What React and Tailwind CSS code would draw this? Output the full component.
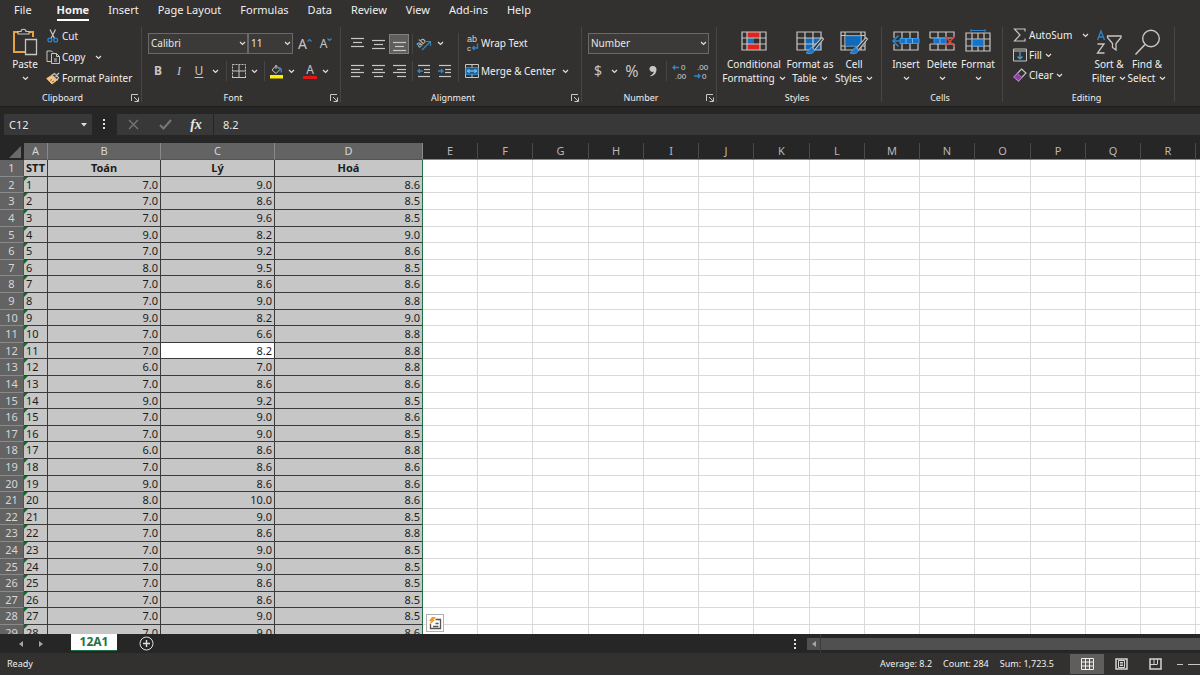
import React from 'react';
import clsx from 'clsx';

const MENU = ['File', 'Home', 'Insert', 'Page Layout', 'Formulas', 'Data', 'Review', 'View', 'Add-ins', 'Help'];

const COLUMNS = 'ABCDEFGHIJKLMNOPQRSTUVWXYZ'.split('');

const SCORES = [
  ['7.0', '9.0', '8.6'],
  ['7.0', '8.6', '8.5'],
  ['7.0', '9.6', '8.5'],
  ['9.0', '8.2', '9.0'],
  ['7.0', '9.2', '8.6'],
  ['8.0', '9.5', '8.5'],
  ['7.0', '8.6', '8.6'],
  ['7.0', '9.0', '8.8'],
  ['9.0', '8.2', '9.0'],
  ['7.0', '6.6', '8.8'],
  ['7.0', '8.2', '8.8'],
  ['6.0', '7.0', '8.8'],
  ['7.0', '8.6', '8.6'],
  ['9.0', '9.2', '8.5'],
  ['7.0', '9.0', '8.6'],
  ['7.0', '9.0', '8.5'],
  ['6.0', '8.6', '8.8'],
  ['7.0', '8.6', '8.6'],
  ['9.0', '8.6', '8.6'],
  ['8.0', '10.0', '8.6'],
  ['7.0', '9.0', '8.5'],
  ['7.0', '8.6', '8.8'],
  ['7.0', '9.0', '8.5'],
  ['7.0', '9.0', '8.5'],
  ['7.0', '8.6', '8.5'],
  ['7.0', '8.6', '8.5'],
  ['7.0', '9.0', '8.5'],
  ['7.0', '9.0', '8.6'],
];

/* ---------- icons ---------- */

const Svg = ({ w, h, children, className }) => (
  <svg width={w} height={h} viewBox={`0 0 ${w} ${h}`} fill="none" stroke="#c8c6c4" className={clsx('shrink-0 overflow-visible', className)} aria-hidden="true">
    {children}
  </svg>
);

const IconText = ({ x, y, size, transform, children }) => (
  <text x={x} y={y} fontSize={size} fill="#d6d4d2" stroke="none" transform={transform} className="font-['Liberation_Sans',sans-serif]">
    {children}
  </text>
);

const Chevron = ({ className }) => (
  <Svg w={7} h={5} className={className}>
    <path d="M1 1l2.5 2.5L6 1" stroke="#e1dfdd" strokeWidth="1.2" />
  </Svg>
);

const PasteIcon = () => (
  <Svg w={26} h={28}>
    <path d="M6 4H2v20h11M17 4h4v5" stroke="#e8a33d" strokeWidth="2" />
    <path d="M6 6V3.500h3C9 .5 14 .5 14 3.500h3V6z" strokeWidth="1.200" />
    <path d="M13.500 11.500h11v15h-11z" fill="#323130" strokeWidth="1.300" />
  </Svg>
);

const CutIcon = () => (
  <Svg w={12} h={14}>
    <path d="M3 .5l4.500 9M8.500 .5L4 9.500" strokeWidth="1.200" />
    <circle cx="2.800" cy="11" r="1.900" stroke="#2f86cc" strokeWidth="1.300" />
    <circle cx="8.700" cy="11" r="1.900" stroke="#2f86cc" strokeWidth="1.300" />
  </Svg>
);

const CopyIcon = () => (
  <Svg w={15} h={14}>
    <path d="M5 11.500H1V1h4.500L7 2.500" />
    <path d="M5.500 3.500h5l3 3v7h-8z" />
    <path d="M10.500 3.500v3h3M8 9h3M8 11h3" />
  </Svg>
);

const PainterIcon = () => (
  <Svg w={14} h={13}>
    <path d="M13 1L9.500 4.500M6 3l5 5 1.500-2.500L8.500 1.500z" strokeWidth="1.200" />
    <path d="M5.500 3.500L.7 6.500 6 12l4.500-3.500z" fill="#f0c890" stroke="#e8b870" />
    <path d="M4 8.500l2-1M6 10l2-1" stroke="#8a6a3a" />
  </Svg>
);

const BordersIcon = () => (
  <Svg w={14} h={14}>
    <path d="M.5 .5h13v13H.5z" strokeDasharray="2 1" />
    <path d="M7 1v12M1 7h12" />
    <path d="M0 13.500h14" />
  </Svg>
);

const FillColorIcon = () => (
  <Svg w={15} h={15}>
    <path d="M7 1.500L3 6l4 3.500L11 5.500z" />
    <path d="M7 1v4" />
    <path d="M10 3.500c2 .5 2.500 2 2.300 5" stroke="#2f86cc" strokeWidth="1.500" />
    <path d="M1 11h13v3.500H1z" fill="#ffee00" stroke="none" />
  </Svg>
);

const Lines = ({ rows, w = 13, h = 14, children }) => (
  <Svg w={w} h={h}>
    {rows.map(([x, y, len]) => (
      <path key={y} d={`M${x} ${y}.5h${len}`} strokeWidth="1.200" />
    ))}
    {children}
  </Svg>
);

const OrientationIcon = () => (
  <Svg w={16} h={14}>
    <IconText x="0" y="8" size="9" transform="rotate(-45 5 7)">ab</IconText>
    <path d="M5 13l8-8M9 4.500h4.500V9" stroke="#2f86cc" strokeWidth="1.200" />
  </Svg>
);

const WrapIcon = () => (
  <Svg w={13} h={16}>
    <IconText x="1" y="7" size="9">ab</IconText>
    <IconText x="1" y="16" size="8">c</IconText>
    <path d="M11.500 8.500V13H6.500M8.500 11l-2 2 2 2" stroke="#2f86cc" strokeWidth="1.300" />
  </Svg>
);

const MergeIcon = () => (
  <Svg w={14} h={14}>
    <path d="M.5 .5h13v13H.5z" />
    <path d="M1 3.500h12v7H1z" fill="#1c5f94" stroke="#2f86cc" />
    <path d="M7 .5v3M7 10.500v3" />
    <path d="M2.500 7h9M4.500 5l-2 2 2 2M9.500 5l2 2-2 2" stroke="#a9d6f5" />
  </Svg>
);

const IndentIcon = ({ out }) => (
  <Lines w={14} rows={[[1, 1, 12], [7, 5, 6], [7, 8, 6], [1, 12, 12]]}>
    <path d={out ? 'M6 7H1M3 5L1 7l2 2' : 'M0 7h5M3 5l2 2-2 2'} stroke="#2f86cc" strokeWidth="1.300" />
  </Lines>
);

const DecimalIcon = ({ more }) => (
  <Svg w={15} h={16}>
    <IconText x={more ? 9 : 4} y="7" size="8">{more ? '0' : '.00'}</IconText>
    <IconText x={more ? 3 : 9} y="16" size="8">{more ? '.00' : '0'}</IconText>
    <path d={more ? 'M7 4.500H1M3 2.500l-2 2 2 2' : 'M1 13h6M5 11l2 2-2 2'} stroke="#2f86cc" strokeWidth="1.300" />
  </Svg>
);

const Brush = () => (
  <>
    <path d="M26 6.500L16.500 17l2 2L27.500 8z" fill="#323130" strokeWidth="1.100" />
    <path d="M16 16.500c-3 0-2.500 3.500-6 5.500 4 1.500 8 .5 8.500-3z" fill="#1f78c8" stroke="#5aa5e0" strokeWidth=".8" />
  </>
);

const ConditionalIcon = () => (
  <Svg w={26} h={23}>
    <path d="M6 1h12v6H6zM6 13h13v6H6z" fill="#e0241b" stroke="none" />
    <path d="M6 7h7v6H6z" fill="#1f6fc0" stroke="none" />
    <path d="M1 1h24v18H1zM1 7h24M1 13h24M6 1v18M19 1v18" strokeWidth="1.200" />
  </Svg>
);

const FormatTableIcon = () => (
  <Svg w={28} h={23}>
    <path d="M9 7h16v12H9z" fill="#1269b8" stroke="none" />
    <path d="M1 1h24v18H1zM1 7h24M1 13h24M9 1v18M17 1v18" strokeWidth="1.200" />
    <Brush />
  </Svg>
);

const CellStylesIcon = () => (
  <Svg w={28} h={23}>
    <path d="M1 1h24v18H1zM1 4.500h24M1 15h24M5 1v18M21 1v18" strokeWidth="1.200" />
    <path d="M5.500 5h15v10h-15z" fill="#1269b8" stroke="#2f86cc" />
    <Brush />
  </Svg>
);

const InsertIcon = () => (
  <Svg w={28} h={23}>
    <path d="M2 7V1h24v6M2 13v6h24v-6M10 1v6M18 1v6M10 13v6M18 13v6" strokeWidth="1.200" />
    <path d="M8 7.500h19v5H8z" fill="#1474cc" stroke="#3f97de" />
    <path d="M8 10H1.500M6.500 4.500L1 10l5.500 5.500" stroke="#2f86cc" strokeWidth="1.500" />
    <path d="M14 7.500v5M20.500 7.500v5" stroke="#6db3ec" />
  </Svg>
);

const DeleteIcon = () => (
  <Svg w={27} h={23}>
    <path d="M1 7V1h24v5M1 7h24M1 13h24M1 13v6h24v-6M9 1v6M17 1v5M9 13v6M17 14v5" strokeWidth="1.200" />
    <path d="M5 7.500h12v5H5z" fill="#1474cc" stroke="#3f97de" />
    <path d="M11 7.500v5" stroke="#6db3ec" />
    <path d="M16.500 5.500l9 10M25.500 5.500l-9 10" stroke="#e0403a" strokeWidth="1.500" />
  </Svg>
);

const FormatIcon = () => (
  <Svg w={26} h={26}>
    <path d="M6 1.500h14M6 0v3M20 0v3" stroke="#2f86cc" />
    <path d="M1 4h24v18H1zM1 10h24M1 17h24M7 4v18M19 4v18M13 4v18" strokeWidth="1.200" />
    <path d="M7.500 10.500h11v6.500h-11z" fill="#1474cc" stroke="#3f97de" />
  </Svg>
);

const SumIcon = () => (
  <Svg w={14} h={14}>
    <path d="M12 3.500V1H1.500L7 7l-5.500 6H12v-2.500" strokeWidth="1.200" />
  </Svg>
);

const FillDownIcon = () => (
  <Svg w={14} h={14}>
    <path d="M.5 1h13v12H.5zM.5 3h13" />
    <path d="M7 4v7M4.500 8.500L7 11l2.500-2.500" stroke="#4ba3e3" strokeWidth="1.200" />
  </Svg>
);

const ClearIcon = () => (
  <Svg w={14} h={14}>
    <path d="M8.500 1l4.500 4-7.500 8L1 9z" strokeWidth="1.100" />
    <path d="M4.500 5.500L9 9.500l-3.500 3.500L1 9z" fill="#8f3fa8" stroke="#b86ccc" />
  </Svg>
);

const SortIcon = () => (
  <Svg w={27} h={26}>
    <path d="M1.500 11L5 2l3.500 9M2.700 8h4.600" stroke="#2f86cc" strokeWidth="1.300" />
    <path d="M1.500 15h6.500L1.500 24H8.500" strokeWidth="1.300" />
    <path d="M11.500 7h13.500v1.500l-5 6V21l-3.500-2.500v-4l-5-6z" strokeWidth="1.300" />
  </Svg>
);

const FindIcon = () => (
  <Svg w={27} h={27}>
    <circle cx="17" cy="9.500" r="8.300" strokeWidth="1.400" />
    <path d="M11 15.500L1.500 25.500" strokeWidth="1.600" />
  </Svg>
);

const LauncherIcon = () => (
  <Svg w={8} h={8}>
    <path d="M.5 7V.5H7M3 3l4 4M7.500 3.500v4h-4" />
  </Svg>
);

/* ---------- ribbon parts ---------- */

const Group = ({ label, width, launcher, children }) => (
  <section aria-label={label} className={clsx('flex h-[84px] shrink-0 flex-col', width)}>
    <div className="flex flex-1">
      <div className="flex min-w-0 flex-1">{children}</div>
      <div className="mt-[5px] w-px bg-[#484644]" />
    </div>
    <div className="flex h-4">
      <div className="flex flex-1 items-center text-[9px] leading-3">
        <span className={clsx('flex-1 text-center', launcher ? 'pr-[6px]' : 'pr-1')}>{label}</span>
        {launcher && (
          <button type="button" aria-label={`${label} settings`} className="mr-[2px]">
            <LauncherIcon />
          </button>
        )}
      </div>
      <div className="mb-1 w-px bg-[#484644]" />
    </div>
  </section>
);

const Tool = ({ label, className, children }) => (
  <button type="button" aria-label={label} className={clsx('flex h-5 shrink-0 items-center justify-center', className)}>
    {children}
  </button>
);

const LabelTool = ({ icon, children, menu, className, gap = 'ml-1' }) => (
  <button type="button" className={clsx('flex h-5 items-center gap-[2px] whitespace-nowrap', className)}>
    <span className="flex w-[14px] justify-center">{icon}</span>
    <span>{children}</span>
    {menu && <Chevron className={gap} />}
  </button>
);

const BigTool = ({ icon, lines, className }) => (
  <button type="button" className={clsx('flex shrink-0 flex-col items-center whitespace-nowrap', className)}>
    <span className="flex h-[30px] items-center">{icon}</span>
    <span className="leading-[14px]">{lines[0]}</span>
    <span className="flex h-[14px] items-center gap-1 leading-[14px]">
      {lines[1]}
      <Chevron />
    </span>
  </button>
);

const Divider = ({ className }) => <div className={clsx('w-px shrink-0 bg-[#484644]', className)} />;

const Dropdown = ({ label, value, className }) => (
  <div className={clsx('relative h-[21px] shrink-0', className)}>
    <select aria-label={label} className="h-full w-full appearance-none border border-[#6b6967] bg-[#3b3a39] pl-[2px] text-[10px] text-[#e8e6e4]">
      <option>{value}</option>
    </select>
    <Chevron className="pointer-events-none absolute right-[2px] top-2" />
  </div>
);

const Ribbon = () => (
  <div className="flex overflow-hidden text-[10px]">
    <Group label="Clipboard" width="w-[142px]" launcher>
      <BigTool className="ml-3 mt-[5px] w-[26px]" icon={<PasteIcon />} lines={['Paste']} />
      <div className="ml-2 mt-1 flex flex-col gap-px">
        <LabelTool icon={<CutIcon />}>Cut</LabelTool>
        <LabelTool icon={<CopyIcon />} menu gap="ml-2">Copy</LabelTool>
        <LabelTool icon={<PainterIcon />}>Format Painter</LabelTool>
      </div>
    </Group>

    <Group label="Font" width="w-[199px]" launcher>
      <div className="ml-[6px] mt-[11px] flex flex-col gap-[7px]">
        <div className="flex items-center">
          <Dropdown label="Font name" value="Calibri" className="w-[100px]" />
          <Dropdown label="Font size" value="11" className="w-[45px]" />
          <Tool label="Grow font" className="ml-1 w-4">
            <span className="text-sm leading-5 text-[#c8c6c4]">A</span>
            <Svg w={5} h={4} className="mb-2"><path d="M.5 3.500l2-2 2 2" stroke="#2f86cc" strokeWidth="1.200" /></Svg>
          </Tool>
          <Tool label="Shrink font" className="ml-[5px] w-4">
            <span className="text-xs leading-5 text-[#c8c6c4]">A</span>
            <Svg w={5} h={4} className="mb-2"><path d="M.5 .5l2 2 2-2" stroke="#2f86cc" strokeWidth="1.200" /></Svg>
          </Tool>
        </div>
        <div className="flex items-center text-xs text-[#c8c6c4]">
          <Tool label="Bold" className="w-5 font-bold">B</Tool>
          <Tool label="Italic" className="w-[22px] font-['Liberation_Serif',serif] italic">I</Tool>
          <Tool label="Underline" className="w-[18px] underline underline-offset-2">U</Tool>
          <Tool label="Underline styles" className="w-[14px]"><Chevron /></Tool>
          <Divider className="mx-1 h-5" />
          <Tool label="Borders" className="w-4"><BordersIcon /></Tool>
          <Tool label="Border styles" className="w-[14px]"><Chevron /></Tool>
          <Divider className="mx-[3px] h-5" />
          <Tool label="Fill color" className="w-4"><FillColorIcon /></Tool>
          <Tool label="Fill colors" className="w-[14px]"><Chevron /></Tool>
          <Tool label="Font color" className="ml-1 w-4 flex-col">
            <span className="text-xs leading-3">A</span>
            <span className="h-[3px] w-[14px] bg-[#e01818]" />
          </Tool>
          <Tool label="Font colors" className="w-[14px]"><Chevron /></Tool>
        </div>
      </div>
    </Group>

    <Group label="Alignment" width="w-[241px]" launcher>
      <div className="ml-[6px] mt-[11px] flex flex-col gap-[7px]">
        <div className="flex h-[21px] items-center">
          <Tool label="Top align" className="w-5"><Lines rows={[[0, 1, 13], [2, 5, 9], [0, 9, 13]]} /></Tool>
          <Tool label="Middle align" className="w-[22px]"><Lines rows={[[0, 3, 13], [2, 7, 9], [0, 11, 13]]} /></Tool>
          <Tool label="Bottom align" className="w-5 border border-[#82807e] bg-[#605e5c]"><Lines rows={[[0, 5, 13], [2, 9, 9], [0, 13, 13]]} /></Tool>
          <Divider className="mx-[3px] h-5" />
          <Tool label="Orientation" className="ml-px w-4"><OrientationIcon /></Tool>
          <Tool label="Orientation menu" className="w-[14px]"><Chevron /></Tool>
        </div>
        <div className="flex items-center">
          <Tool label="Align left" className="w-5"><Lines rows={[[0, 1, 13], [0, 5, 9], [0, 8, 13], [0, 12, 9]]} /></Tool>
          <Tool label="Center" className="w-[22px]"><Lines rows={[[0, 1, 13], [2, 5, 9], [0, 8, 13], [2, 12, 9]]} /></Tool>
          <Tool label="Align right" className="w-5"><Lines rows={[[0, 1, 13], [4, 5, 9], [0, 8, 13], [4, 12, 9]]} /></Tool>
          <Divider className="mx-[3px] h-5" />
          <Tool label="Decrease indent" className="w-4"><IndentIcon out /></Tool>
          <Tool label="Increase indent" className="ml-[3px] w-5"><IndentIcon /></Tool>
        </div>
      </div>
      <Divider className="ml-[3px] mt-[11px] h-[49px]" />
      <div className="ml-[6px] mt-[11px] flex flex-col gap-2">
        <LabelTool icon={<WrapIcon />}>Wrap Text</LabelTool>
        <LabelTool icon={<MergeIcon />} menu>Merge &amp; Center</LabelTool>
      </div>
    </Group>

    <Group label="Number" width="w-[135px]" launcher>
      <div className="ml-[6px] mt-[11px] flex flex-col gap-[7px]">
        <Dropdown label="Number format" value="Number" className="w-[121px]" />
        <div className="flex items-center text-[#c8c6c4]">
          <Tool label="Currency" className="w-5 text-sm">$</Tool>
          <Tool label="Currency menu" className="w-3"><Chevron /></Tool>
          <Tool label="Percent" className="ml-1 w-4 text-base">%</Tool>
          <Tool label="Comma style" className="ml-1 w-[18px]">
            <Svg w={8} h={12}><path d="M4 1a3 3 0 1 0 .8 5.600C4.500 8.500 3.500 9.500 1.500 10.500v1C5.500 10.500 7.500 8 7.500 4.500 7.500 2.500 6 1 4 1z" fill="#c8c6c4" stroke="none" /></Svg>
          </Tool>
          <Divider className="mx-1 h-5" />
          <Tool label="Increase decimal" className="w-4"><DecimalIcon more /></Tool>
          <Tool label="Decrease decimal" className="ml-[5px] w-4"><DecimalIcon /></Tool>
        </div>
      </div>
    </Group>

    <Group label="Styles" width="w-[165px]">
      <div className="ml-[6px] mt-[5px] flex">
        <BigTool className="w-[62px]" icon={<ConditionalIcon />} lines={['Conditional', 'Formatting']} />
        <BigTool className="w-[50px]" icon={<FormatTableIcon />} lines={['Format as', 'Table']} />
        <BigTool className="w-[38px]" icon={<CellStylesIcon />} lines={['Cell', 'Styles']} />
      </div>
    </Group>

    <Group label="Cells" width="w-[121px]">
      <div className="ml-[6px] mt-[5px] flex">
        <BigTool className="w-9" icon={<InsertIcon />} lines={['Insert']} />
        <BigTool className="w-9" icon={<DeleteIcon />} lines={['Delete']} />
        <BigTool className="w-9" icon={<FormatIcon />} lines={['Format']} />
      </div>
    </Group>

    <Group label="Editing" width="w-[172px]">
      <div className="ml-[10px] mt-[3px] flex w-[74px] flex-col">
        <LabelTool icon={<SumIcon />} menu gap="ml-2">AutoSum</LabelTool>
        <LabelTool icon={<FillDownIcon />} menu gap="ml-px">Fill</LabelTool>
        <LabelTool icon={<ClearIcon />} menu gap="ml-px">Clear</LabelTool>
      </div>
      <div className="ml-1 mt-[5px] flex">
        <BigTool className="w-9" icon={<SortIcon />} lines={['Sort &', 'Filter']} />
        <BigTool className="w-10" icon={<FindIcon />} lines={['Find &', 'Select']} />
      </div>
    </Group>
  </div>
);

const FormulaBar = () => (
  <div className="flex h-[37px] items-center border-t border-[#1f1e1d] bg-[#262626] pb-px text-[11px] text-[#e8e6e4]">
    <div className="relative ml-1 h-[21px] w-[88px]">
      <input aria-label="Name box" defaultValue="C12" className="h-full w-full bg-[#383838] pl-[5px]" />
      <Svg w={6} h={4} className="absolute right-[5px] top-[9px]"><path d="M0 0h6L3 3.500z" fill="#e1dfdd" stroke="none" /></Svg>
    </div>
    <Svg w={3} h={11} className="ml-[11px]"><path d="M0 0h2v2H0zM0 4h2v2H0zM0 8h2v2H0z" fill="#e1dfdd" stroke="none" /></Svg>
    <div className="ml-[11px] flex h-[21px] w-[97px] items-center border-r border-[#262626] bg-[#383838]">
      <Tool label="Cancel" className="w-8"><Svg w={11} h={11}><path d="M1 1l9 9M10 1l-9 9" stroke="#7a7876" strokeWidth="1.300" /></Svg></Tool>
      <Tool label="Enter" className="w-8"><Svg w={13} h={11}><path d="M1 6l3.500 3.500L12 1" stroke="#7a7876" strokeWidth="2" /></Svg></Tool>
      <Tool label="Insert function" className="w-[30px] font-['Liberation_Serif',serif] text-sm font-bold italic">fx</Tool>
    </div>
    <input aria-label="Formula" defaultValue="8.2" className="h-[21px] min-w-0 flex-1 bg-[#383838] pl-[9px]" />
  </div>
);

/* ---------- sheet ---------- */

const colWidth = (i) => {
  if (i === 0) return 'w-6';
  if (i === 1) return 'w-[113px]';
  if (i === 2) return 'w-[114px]';
  if (i === 3) return 'w-[148px]';
  return i % 4 === 2 ? 'w-[56px]' : 'w-[55px]';
};

const Row = ({ number, cells, heading }) => (
  <tr className="h-[17px] nth-[5n]:h-4 nth-[5n+2]:h-4">
    <th scope="row" className="border-b border-r border-b-[#8a8a8a] border-r-[#1e7145] bg-[#636363] p-0 align-top font-normal text-[#d6d6d6]">{number}</th>
    {cells.map((value, i) => (
      <td
        key={i}
        className={clsx(
          'relative overflow-hidden border-b border-r border-b-[#3a3a3a] p-0 align-top',
          i === 3 ? 'border-r-[#1e7145]' : 'border-r-[#3a3a3a]',
          number === 12 && i === 2 ? 'bg-white' : 'bg-[#c6c6c6]',
          heading ? 'text-center font-bold' : i === 0 ? 'pl-[2px] text-left' : 'pr-[2px] text-right',
        )}
      >
        {value}
        {!heading && i === 0 && (
          <svg width="4" height="4" className="absolute left-0 top-0" aria-hidden="true"><path d="M0 0h4L0 4z" fill="#0f6b2c" /></svg>
        )}
      </td>
    ))}
    {COLUMNS.slice(4).map((c) => (
      <td key={c} className="border-b border-r border-[#d9d9d9] bg-white p-0" />
    ))}
  </tr>
);

const Sheet = () => (
  <main className="relative min-h-0 flex-1 overflow-hidden bg-white">
    <table className="w-max table-fixed border-separate border-spacing-0 text-[11px] leading-[15px] text-[#1c1c1c]">
      <colgroup>
        <col className="w-6" />
        {COLUMNS.map((c, i) => <col key={c} className={colWidth(i)} />)}
      </colgroup>
      <thead>
        <tr className="h-[17px]">
          <th aria-label="Select all" className="bg-[#262626] p-0">
            <svg width="12" height="12" className="ml-[9px]" aria-hidden="true"><path d="M12 0v12H0z" fill="#6a6a6a" /></svg>
          </th>
          {COLUMNS.map((c, i) => (
            <th
              key={c}
              scope="col"
              className={clsx(
                'border-b border-r p-0 align-top font-normal',
                i < 4 ? 'border-b-[#1e7145] border-r-[#8a8a8a] bg-[#636363] text-[#d6d6d6]' : 'border-b-[#8a8a8a] border-r-[#4a4a4a] bg-[#262626] text-[#b8b8b8]',
              )}
            >
              {c}
            </th>
          ))}
        </tr>
      </thead>
      <tbody>
        <Row number={1} cells={['STT', 'Toán', 'Lý', 'Hoá']} heading />
        {SCORES.map((scores, i) => (
          <Row key={i} number={i + 2} cells={[i + 1, ...scores]} />
        ))}
      </tbody>
    </table>
    <button type="button" aria-label="Quick analysis" className="absolute bottom-[2px] left-[426px] flex h-[18px] w-[18px] items-center justify-center border border-[#b0b0b0] bg-white">
      <Svg w={14} h={13}>
        <path d="M2.500 7v4.500h10v-9h-5" stroke="#555" strokeWidth="1.300" />
        <path d="M5 9.500h5.500M7.500 6.500h3" stroke="#555" strokeWidth="1.500" />
        <path d="M4 0h4L5.500 3H7L1.500 8l1.500-4H1z" fill="#ef9a2d" stroke="none" />
      </Svg>
    </button>
  </main>
);

const SheetTabs = () => (
  <div className="flex h-[19px] shrink-0 items-center bg-[#262626]">
    <Tool label="Previous sheet" className="ml-4 w-[10px]"><Svg w={4} h={6}><path d="M4 0v6L0 3z" fill="#a8a6a4" stroke="none" /></Svg></Tool>
    <Tool label="Next sheet" className="ml-[10px] w-[10px]"><Svg w={4} h={6}><path d="M0 0v6l4-3z" fill="#a8a6a4" stroke="none" /></Svg></Tool>
    <button type="button" className="ml-[25px] h-[17px] w-[46px] self-start border-b border-[#1e7145] bg-white text-xs font-bold leading-4 text-[#217346]">12A1</button>
    <Tool label="New sheet" className="ml-[22px] w-[15px]">
      <Svg w={15} h={15}><circle cx="7.500" cy="7.500" r="6.500" stroke="#e1dfdd" /><path d="M7.500 4v7M4 7.500h7" stroke="#e1dfdd" strokeWidth="1.400" /></Svg>
    </Tool>
    <Svg w={3} h={10} className="ml-auto"><path d="M0 0h2v2H0zM0 4h2v2H0zM0 8h2v2H0z" fill="#e1dfdd" stroke="none" /></Svg>
    <div className="ml-[10px] flex h-3 w-[393px] items-center bg-[#505050]">
      <Tool label="Scroll left" className="h-3 w-[14px] border-r border-[#3a3a3a]"><Svg w={4} h={6}><path d="M4 0v6L0 3z" fill="#a8a6a4" stroke="none" /></Svg></Tool>
    </div>
  </div>
);

const StatusBar = () => (
  <footer className="flex h-[22px] shrink-0 items-center bg-[#323130] text-[9px]">
    <span className="ml-[7px]">Ready</span>
    <div className="ml-auto flex gap-[11px] pr-4">
      <span>Average: 8.2</span>
      <span>Count: 284</span>
      <span>Sum: 1,723.5</span>
    </div>
    <Tool label="Normal view" className="w-[34px] bg-[#605e5c]">
      <Svg w={13} h={12}><path d="M.5 .5h12v11H.5zM4.500 0v12M8.500 0v12M0 4h13M0 8h13" stroke="#f0efee" /></Svg>
    </Tool>
    <Tool label="Page layout view" className="w-[34px]">
      <Svg w={13} h={12}><path d="M1 1h11v10H1z" stroke="#d6d4d2" strokeWidth="1.500" /><path d="M3.500 2.500h6v7h-6zM5 4.500h3M5 6h3M5 7.500h3" stroke="#d6d4d2" /></Svg>
    </Tool>
    <Tool label="Page break view" className="w-[34px]">
      <Svg w={13} h={12}><path d="M1 1h11v10H1z" stroke="#d6d4d2" strokeWidth="1.500" /><path d="M5 1v5M8.500 1v5M1 6.500h7.500" stroke="#d6d4d2" /></Svg>
    </Tool>
    <Tool label="Zoom out" className="ml-1 w-[8px]"><Svg w={6} h={1}><path d="M0 .5h6" /></Svg></Tool>
    <div className="ml-1 flex w-3 items-center overflow-hidden">
      <input type="range" aria-label="Zoom" className="h-px w-24 shrink-0 appearance-none bg-[#c8c6c4]" />
    </div>
  </footer>
);

export default function App() {
  return (
    <div className="flex h-screen flex-col overflow-hidden bg-[#323130] font-['Noto_Sans',sans-serif] text-[#f0efee]">
      <nav className="flex h-[22px] shrink-0 gap-[19px] pl-[14px] text-[11px]">
        {MENU.map((item) => (
          <a
            key={item}
            href="#"
            className={clsx('h-[21px] whitespace-nowrap leading-5', item === 'Home' && 'ml-[6px] border-b-2 border-white font-bold')}
          >
            {item}
          </a>
        ))}
      </nav>
      <Ribbon />
      <FormulaBar />
      <Sheet />
      <SheetTabs />
      <StatusBar />
    </div>
  );
}
